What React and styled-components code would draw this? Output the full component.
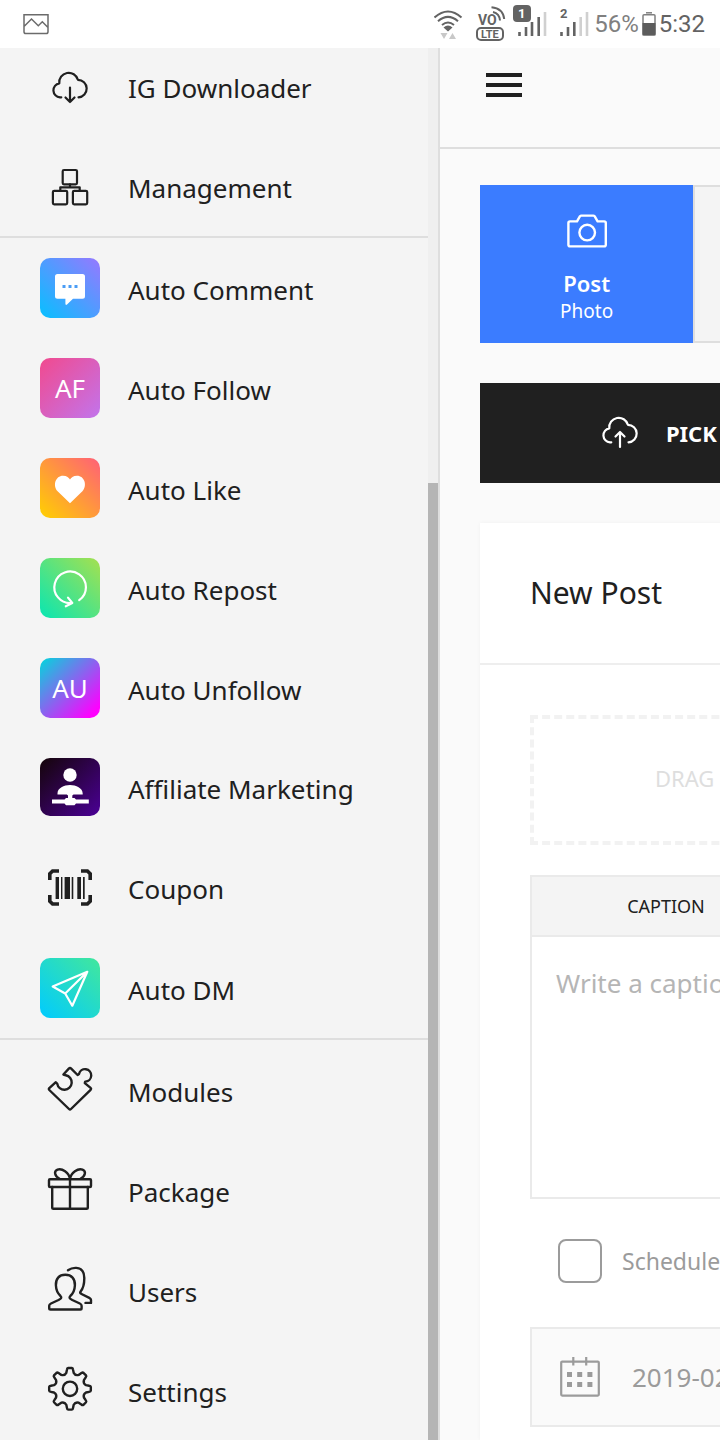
import React from 'react'
import styled, { createGlobalStyle } from 'styled-components'


const GlobalStyle = createGlobalStyle`
    * {
        box-sizing: border-box;
    }

    body {
        margin: 0;
        background: #fafafa;
        color: #202020;
        font-family: "Noto Sans", "Open Sans", sans-serif;
        overflow-x: hidden;
    }

    button, input, textarea {
        font-family: inherit;
    }
`

const Page = styled.div`
    display: flex;
    flex-direction: column;
    min-height: 100vh;
    overflow: hidden;
`

/* ---------- status bar ---------- */

const StatusBar = styled.header`
    display: flex;
    align-items: center;
    height: 48px;
    padding: 0 15px 0 22px;
    background: #fff;
    color: #636363;
    font-family: Roboto, sans-serif;
    font-size: 24px;
    position: relative;
    z-index: 2;
`

const StatusIcons = styled.svg`
    display: block;
    margin-left: auto;
`

const Percent = styled.span`
    color: #808080;
    margin-left: 4px;
`

const Battery = styled.svg`
    display: block;
    margin: 0 3px;
`

/* ---------- sidebar ---------- */

const Body = styled.div`
    display: flex;
    flex: 1;
`

const Sidebar = styled.aside`
    display: flex;
    flex: 0 0 440px;
    background: #f4f4f4;
    border-right: 2px solid #dedede;
`

const Nav = styled.nav`
    flex: 1;
    margin-top: -12px;
`

const Group = styled.div`
    border-bottom: ${props => props.$last ? 'none' : '2px solid #dedede'};
`

const MenuItem = styled.a`
    display: flex;
    align-items: center;
    gap: 28px;
    padding: 20px 0 20px 40px;
    color: #202020;
    text-decoration: none;
`

const Tile = styled.span`
    display: flex;
    align-items: center;
    justify-content: center;
    width: 60px;
    height: ${props => props.$height || 60}px;
    border-radius: 10px;
    background: ${props => props.$fill || 'none'};
    color: ${props => props.$fill ? '#fff' : '#202020'};
    font-size: 26px;
`

const Label = styled.span`
    padding-top: 4px;
    font-size: 26px;
    line-height: 36px;
    white-space: nowrap;
`

const ScrollTrack = styled.div`
    display: flex;
    flex-direction: column;
    justify-content: flex-end;
    width: 10px;
    background: #efefef;
`

const ScrollThumb = styled.div`
    height: 68.75%;
    background: #b5b5b5;
`

/* ---------- main ---------- */

const Main = styled.main`
    flex: 0 0 100vw;
`

const TopBar = styled.div`
    height: 101px;
    padding: 25px 46px;
    border-bottom: 2px solid #dedede;
`

const MenuButton = styled.button`
    display: flex;
    flex-direction: column;
    gap: 6px;
    width: 36px;
    padding: 0;
    border: 0;
    background: none;
`

const Bar = styled.span`
    height: 4px;
    background: #202020;
`

const Content = styled.div`
    padding: 36px 40px 0;
`

const Types = styled.div`
    display: grid;
    grid-template-columns: repeat(3, 1fr);
    height: 158px;
`

const Type = styled.button`
    display: flex;
    flex-direction: column;
    align-items: center;
    padding: 26px 0 0;
    border: 2px solid ${props => props.$active ? '#3b7cff' : '#dedede'};
    background: ${props => props.$active ? '#3b7cff' : '#f4f4f4'};
    color: ${props => props.$active ? '#fff' : '#202020'};
`

const TypeName = styled.strong`
    margin-top: 18px;
    font-size: 22px;
    font-weight: 600;
    line-height: 32px;
`

const TypeInfo = styled.span`
    font-size: 19px;
    line-height: 24px;
`

const PickButton = styled.button`
    display: flex;
    align-items: center;
    justify-content: center;
    gap: 16px;
    width: 100%;
    height: 100px;
    margin: 40px 0;
    padding: 0;
    border: 0;
    background: #202020;
    color: #fff;
    font-size: 22px;
    font-weight: 700;
    white-space: nowrap;
`

const Card = styled.section`
    background: #fff;
    box-shadow: 0 0 4px rgba(0, 0, 0, 0.04);
`

const CardTitle = styled.h1`
    margin: 0;
    padding: 48px 50px;
    border-bottom: 2px solid #eee;
    font-size: 30px;
    font-weight: 400;
    line-height: 44px;
`

const CardBody = styled.div`
    padding: 50px 50px 13px;
`

const DropZone = styled.div`
    display: flex;
    align-items: center;
    justify-content: center;
    height: 130px;
    padding-bottom: 4px;
    border: 4px dashed #f2f2f2;
    color: #dedede;
    font-size: 22px;
    white-space: nowrap;
`

const Editor = styled.div`
    margin-top: 30px;
    border: 2px solid #eaeaea;
`

const Tabs = styled.div`
    display: grid;
    grid-template-columns: 1fr 1fr;
    height: 60px;
    border-bottom: 2px solid #eaeaea;
`

const Tab = styled.button`
    padding: 0;
    border: 0;
    background: #f4f4f4;
    color: #202020;
    font-size: 18px;
`

const Caption = styled.textarea`
    display: block;
    width: 100%;
    height: 260px;
    padding: 28px 24px;
    border: 0;
    background: #fff;
    color: #202020;
    font-size: 26px;
    line-height: 36px;
    resize: none;

    &::placeholder {
        color: #b5b5b5;
    }
`

const Schedule = styled.label`
    display: flex;
    align-items: center;
    gap: 20px;
    margin: 40px 28px 44px;
    color: #9b9b9b;
    font-size: 23px;
`

const Checkbox = styled.input`
    appearance: none;
    width: 44px;
    height: 44px;
    margin: 0;
    border: 2px solid #9b9b9b;
    border-radius: 8px;
    background: #fff;
`

const DateField = styled.label`
    display: flex;
    align-items: center;
    gap: 32px;
    height: 100px;
    padding: 0 28px;
    border: 2px solid #eaeaea;
    background: #fafafa;
    color: #9b9b9b;
`

const DateInput = styled.input`
    flex: 1;
    min-width: 0;
    padding: 0;
    border: 0;
    background: none;
    color: #9b9b9b;
    font-size: 26px;
`

/* ---------- icons ---------- */

const Icon = ({ children, width = 2, top = 0 }) => (
    <svg width="60" height="60" viewBox={`0 ${top} 60 60`} fill="none" stroke="currentColor"
        strokeWidth={width} strokeLinecap="round" strokeLinejoin="round" aria-hidden="true">
        {children}
    </svg>
)

const cloud = 'M21.3 41.3H20A7 7 0 0 1 19.3 27.4A9.5 9.5 0 0 1 37.9 23.8A8.76 8.76 0 0 1 38.5 41.3'

const CloudDown = () => (
    <Icon width={2.2}>
        <path d={cloud} />
        <path d="M30 31.5V46M25.5 41.5L30 46L34.5 41.5" />
    </Icon>
)

const CloudUp = () => (
    <Icon width={2.2} top={2}>
        <path d={cloud} />
        <path d="M30 46V31M25.5 35.5L30 31L34.5 35.5" />
    </Icon>
)

const Blocks = () => (
    <Icon width={2.2}>
        <rect x="22.7" y="14" width="14.3" height="14.3" rx="1.3" />
        <rect x="12.9" y="34.8" width="14.3" height="13.6" rx="1.3" />
        <rect x="32.9" y="34.8" width="14.3" height="13.6" rx="1.3" />
        <path d="M30 28.3V31.3M20.3 34.5V31.3H39.7V34.5" />
    </Icon>
)

const Comment = () => (
    <Icon width={0}>
        <path fill="currentColor" d="M17.5 16H42.5Q45 16 45 18.5V38.2Q45 40.7 42.5 40.7H33L27 46.5Q25.4 47.6 25.4 45.5V40.7H17.5Q15 40.7 15 38.2V18.5Q15 16 17.5 16Z" />
        <path fill="#4b9df6" d="M22.5 27H25.5V30H22.5ZM28.5 27H31.5V30H28.5ZM34.5 27H37.5V30H34.5Z" />
    </Icon>
)

const Heart = () => (
    <Icon width={0}>
        <path fill="currentColor" d="M30 45.3L17.6 33.2C12.4 27.5 15.5 17.7 23 17.7C26.8 17.7 29 19.8 30 21.6C31 19.8 33.2 17.7 37 17.7C44.5 17.7 47.6 27.5 42.4 33.2Z" />
    </Icon>
)

const Repost = () => (
    <Icon width={2.2}>
        <path d="M39.2 42.2A15.8 15.8 0 1 0 31.5 45" />
        <path d="M28 39.6L32.3 45L25.8 48.3" />
    </Icon>
)

const Affiliate = () => (
    <Icon width={0}>
        <g fill="currentColor">
            <circle cx="30" cy="18" r="6.7" />
            <path d="M17.5 37.5V36.5C17.5 31 24 28 30 28S42.7 31 42.7 36.5V37.5H33.5L32.3 38.6V41H34.5L36 42.6H48.8V46.4H36L34.5 48.3H26L24.5 46.4H12V42.6H24.5L26 41H28V38.6L26.8 37.5Z" />
        </g>
    </Icon>
)

const Barcode = () => (
    <Icon width={3}>
        <path strokeLinecap="butt" strokeLinejoin="miter" strokeWidth="3.6" d="M19 14H12.6L9.8 16.8V23M41 14H47.4L50.2 16.8V23M19 47H12.6L9.8 44.2V38M41 47H47.4L50.2 44.2V38" />
        <path stroke="none" fill="currentColor" d="M15.6 20H19V42H15.6ZM21 20H22.4V42H21ZM24.6 20H30V42H24.6ZM31.7 20H33.3V42H31.7ZM37.3 20H41V42H37.3ZM43 20H44.7V42H43Z" />
    </Icon>
)

const Plane = () => (
    <Icon width={2.2}>
        <path d="M47.3 13.8L12.7 28.5L25.2 35.5L32.3 47.7ZM25.2 35.5L47.3 13.8" />
    </Icon>
)

const Puzzle = () => (
    <Icon width={2.4}>
        <path d="M9.3 28.2L15.6 22.3L17.2 23.6A7.3 7.3 0 1 0 25.8 15.3L23.4 14.5L28.8 8.6Q30 7.4 31.2 8.6L37.6 15L39 14A6.2 6.2 0 1 1 45.2 21.6L44.8 23.1L50.6 27.9Q51.6 28.9 50.6 29.9L31 49Q30 50 29 49L9.3 30Q8.4 29.1 9.3 28.2Z" />
    </Icon>
)

const Gift = () => (
    <Icon width={2.4}>
        <rect x="9" y="19.2" width="42" height="7.8" rx="1" />
        <path d="M12.2 27V47.5Q12.2 48.8 13.5 48.8H46.5Q47.8 48.8 47.8 47.5V27M30 19.2V48.8" />
        <path d="M30 19C29 12.5 22 8 17.5 9.6C13.5 11.2 14.6 16 19.5 18.8M30 19C31 12.5 38 8 42.5 9.6C46.5 11.2 45.4 16 40.5 18.8" />
    </Icon>
)

const People = () => (
    <Icon width={2.4}>
        <path d="M25.3 14.8C19 14.8 15.6 18.8 15.9 25.3C16.1 30.5 17.7 33.5 20.5 36C22.2 37.6 21 38.6 18.5 40L11 43.5Q9.2 44.4 9.2 45.8V48.2Q9.2 49.5 10.5 49.5H40.3Q41.6 49.5 41.6 48.2V45.8Q41.6 44.4 39.8 43.5L32.3 40C29.8 38.6 28.6 37.6 30.3 36C33.3 33.5 34.7 30.5 34.9 25.3C35.2 18.8 31.6 14.8 25.3 14.8Z" />
        <path d="M28 10.2C30.5 8.4 33 7.7 36.3 7.9C42 8.3 44.3 12.3 44.3 18C44.3 25 43.6 28 40.6 31.5C39.6 32.8 40.4 33.4 42 34.2L49.3 37.8Q51 38.6 51 40V42.9H45.5" />
    </Icon>
)

// eight teeth, each one a valley point, two tip points and a valley point
const gearPoint = (radius, degrees) => {
    const a = (degrees - 90) * Math.PI / 180
    return `${(30 + radius * Math.cos(a)).toFixed(2)} ${(28.8 + radius * Math.sin(a)).toFixed(2)}`
}

const gear = [0, 45, 90, 135, 180, 225, 270, 315].map((deg, i) => (
    `${i ? 'L' : 'M'}${gearPoint(16.4, deg - 13)}L${gearPoint(19.4, deg - 9)}Q${gearPoint(20.9, deg - 8)} ${gearPoint(20.9, deg - 5)}` +
    `L${gearPoint(20.9, deg + 5)}Q${gearPoint(20.9, deg + 8)} ${gearPoint(19.4, deg + 9)}L${gearPoint(16.4, deg + 13)}` +
    `Q${gearPoint(14, deg + 22.5)} ${gearPoint(16.4, deg + 32)}`
)).join('') + 'Z'

const Gear = () => (
    <Icon width={2.4}>
        <path d={gear} />
        <circle cx="30" cy="28.8" r="7.2" />
    </Icon>
)

const Camera = () => (
    <svg width="40" height="36" viewBox="1 0 40 36" fill="none" stroke="currentColor" strokeWidth="2.4" strokeLinejoin="round" aria-hidden="true">
        <path d="M4 8.4H11L14 3.2Q14.5 2.6 15.3 2.6H27.3Q28.1 2.6 28.6 3.2L31.6 8.4H38.2Q39.8 8.4 39.8 10V31.8Q39.8 33.4 38.2 33.4H4Q2.4 33.4 2.4 31.8V10Q2.4 8.4 4 8.4Z" />
        <circle cx="21.2" cy="19.6" r="7.8" />
    </svg>
)

const Calendar = () => (
    <svg width="40" height="40" viewBox="0 0 40 40" fill="none" stroke="currentColor" strokeWidth="2.2" aria-hidden="true">
        <rect x="1.2" y="4.6" width="37.6" height="34" rx="1" />
        <path d="M13.3 0V8.5M26.2 0V8.5" />
        <path strokeWidth="5" d="M7 17.5H12M17.2 17.5H22.2M27.4 17.5H32.4M7 27.5H12M17.2 27.5H22.2M27.4 27.5H32.4" />
    </svg>
)

const Picture = () => (
    <svg width="28" height="22" viewBox="0 0 28 22" fill="none" stroke="#6b6b6b" strokeWidth="1.5" aria-hidden="true">
        <path d="M2 1.7H26V18.7Q26 20.5 24.2 20.5H3.8Q2 20.5 2 18.7ZM2 13.5L9.5 6L16.3 12.7L20.3 8.8L26 14.5" />
    </svg>
)

const Signals = () => (
    <StatusIcons width="156" height="48" viewBox="0 0 156 48" fill="none" stroke="#636363" strokeWidth="2" aria-hidden="true">
        {/* wifi */}
        <path d="M0.5 17.5Q14 5.5 27.5 17.5M4 21.2Q14 12.5 24 21.2M8 25Q14 20 20 25" />
        <path fill="#636363" stroke="none" d="M9.5 27.5Q14 23.5 18.5 27.5L14 31.5Z" />
        <path fill="#c8c8c8" stroke="none" d="M6.5 33H13.5L10 39ZM15 39H22L18.5 33Z" />
        {/* volte */}
        <rect x="43" y="28" width="26" height="12" rx="4" />
        <path d="M57.5 7.3Q69 8.5 70.2 19M59 12Q65.5 13.5 66 20.5" />
        <text x="44" y="25" fontSize="14" fontWeight="700" fill="#636363" stroke="none">VO</text>
        <text x="47" y="38" fontSize="11" fontWeight="700" fill="#636363" stroke="none">LTE</text>
        {/* first sim */}
        <rect x="79" y="5" width="18" height="17" rx="4" fill="#636363" stroke="none" />
        <text x="84" y="18" fontSize="13" fontWeight="700" fill="#fff" stroke="none">1</text>
        <path d="M85.5 32V36M92 27V36M98 22V36M104.7 17V36" strokeWidth="2.6" />
        <path strokeWidth="2.6" stroke="#d0d0d0" d="M111 12V36" />
        {/* second sim */}
        <text x="126" y="18" fontSize="13" fontWeight="700" fill="#636363" stroke="none">2</text>
        <path strokeWidth="2.6" d="M127.5 32V36M134 27V36M140.3 22V36" />
        <path strokeWidth="2.6" stroke="#d0d0d0" d="M146.7 17V36M153 12V36" />
    </StatusIcons>
)

/* ---------- data ---------- */

const groups = [
    [
        { title: 'IG Downloader', icon: <CloudDown /> },
        { title: 'Management', icon: <Blocks /> },
    ],
    [
        { title: 'Auto Comment', icon: <Comment />, fill: 'linear-gradient(45deg, #06c0ff, #9778ff)' },
        { title: 'Auto Follow', icon: 'AF', fill: 'linear-gradient(135deg, #f14a8e, #c274ec)' },
        { title: 'Auto Like', icon: <Heart />, fill: 'linear-gradient(45deg, #ffd000, #ff6078)' },
        { title: 'Auto Repost', icon: <Repost />, fill: 'linear-gradient(45deg, #08e6b2, #a6e04f)' },
        { title: 'Auto Unfollow', icon: 'AU', fill: 'linear-gradient(135deg, #00d8dc, #ff00ff 90%)' },
        { title: 'Affiliate Marketing', icon: <Affiliate />, fill: 'linear-gradient(135deg, #140508, #4b0096)', height: 58 },
        { title: 'Coupon', icon: <Barcode />, height: 62 },
        { title: 'Auto DM', icon: <Plane />, fill: 'linear-gradient(45deg, #00cbff, #42e79c)' },
    ],
    [
        { title: 'Modules', icon: <Puzzle /> },
        { title: 'Package', icon: <Gift /> },
        { title: 'Users', icon: <People /> },
        { title: 'Settings', icon: <Gear /> },
    ],
]

const MenuLink = ({ title, icon, fill, height }) => {

    return (
        <MenuItem href="#">
            <Tile $fill={fill} $height={height}>{icon}</Tile>
            <Label>{title}</Label>
        </MenuItem>
    )
}

const App = () => {

    return (
        <Page>
            <GlobalStyle />
            <StatusBar>
                <Picture />
                <Signals />
                <Percent>56%</Percent>
                <Battery width="14" height="24" viewBox="0 0 14 24" aria-hidden="true">
                    <path d="M4 0.8H10" stroke="#808080" strokeWidth="1.5" />
                    <rect x="1" y="2.8" width="12" height="20" rx="1" fill="#fff" stroke="#808080" strokeWidth="1.5" />
                    <rect x="0.5" y="11" width="13" height="12.5" fill="#5c5c5c" />
                </Battery>
                <span>5:32</span>
            </StatusBar>

            <Body>
                <Sidebar>
                    <Nav>
                        {groups.map((items, i) => (
                            <Group key={i} $last={i === groups.length - 1}>
                                {items.map(item => <MenuLink key={item.title} {...item} />)}
                            </Group>
                        ))}
                    </Nav>
                    <ScrollTrack>
                        <ScrollThumb />
                    </ScrollTrack>
                </Sidebar>

                <Main>
                    <TopBar>
                        <MenuButton aria-label="Menu">
                            <Bar />
                            <Bar />
                            <Bar />
                        </MenuButton>
                    </TopBar>
                    <Content>
                        <Types>
                            <Type $active>
                                <Camera />
                                <TypeName>Post</TypeName>
                                <TypeInfo>Photo</TypeInfo>
                            </Type>
                            <Type aria-label="Story" />
                            <Type aria-label="Album" />
                        </Types>

                        <PickButton>
                            <CloudUp />
                            PICK A FILE FROM YOUR DEVICE
                        </PickButton>

                        <Card>
                            <CardTitle>New Post</CardTitle>
                            <CardBody>
                                <DropZone>DRAG MEDIA FILES TO HERE</DropZone>

                                <Editor>
                                    <Tabs>
                                        <Tab>CAPTION</Tab>
                                        <Tab aria-label="First comment" />
                                    </Tabs>
                                    <Caption aria-label="Caption" placeholder="Write a caption" />
                                </Editor>

                                <Schedule>
                                    <Checkbox type="checkbox" />
                                    Schedule
                                </Schedule>

                                <DateField>
                                    <Calendar />
                                    <DateInput aria-label="Date" defaultValue="2019-02-14 17:32" />
                                </DateField>
                            </CardBody>
                        </Card>
                    </Content>
                </Main>
            </Body>
        </Page>
    )
}

export default App
